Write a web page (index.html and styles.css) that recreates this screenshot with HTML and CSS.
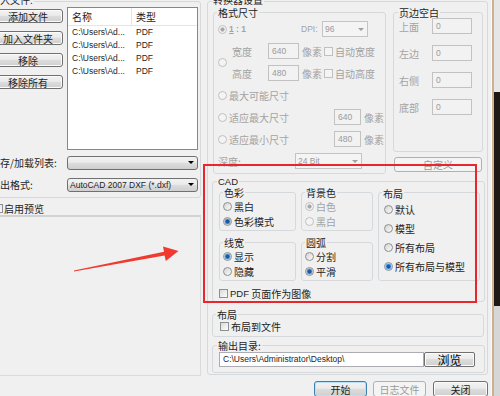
FILE: index.html
```html
<html>
<head>
	<title>PDF 转换</title>
	<link rel="stylesheet" href="styles.css">
</head>

<body>

<div class="screen">
	<div class="dialog">
		<div class="left">
			<div class="group files">
				<div class="legend top">输入文件:</div>
				<div class="files-body">
					<div class="file-buttons">
						<div class="btn">添加文件</div>
						<div class="btn">加入文件夹</div>
						<div class="btn">移除</div>
						<div class="btn">移除所有</div>
					</div>
					<div class="listview">
						<div class="lv-row lv-head"><span>名称</span><span>类型</span></div>
						<div class="lv-row en"><span>C:\Users\Ad...</span><span>PDF</span></div>
						<div class="lv-row en"><span>C:\Users\Ad...</span><span>PDF</span></div>
						<div class="lv-row en"><span>C:\Users\Ad...</span><span>PDF</span></div>
						<div class="lv-row en"><span>C:\Users\Ad...</span><span>PDF</span></div>
					</div>
				</div>
				<div class="field-row">
					<span class="field-label">保存/加载列表:</span>
					<div class="combo"><span></span><i class="caret"></i></div>
				</div>
				<div class="field-row second">
					<span class="field-label">输出格式:</span>
					<div class="combo"><span class="en">AutoCAD 2007 DXF (*.dxf)</span><i class="caret"></i></div>
				</div>
			</div>
			<div class="preview-check"><span class="check"></span>启用预览</div>
			<div class="preview-box"></div>
		</div>

		<div class="right">
			<div class="group converter">
				<div class="legend top">转换器设置</div>
				<div class="top-row">
					<div class="group format">
						<div class="legend">格式尺寸</div>
						<div class="dim">
							<div class="fmt-row">
								<span class="radio on off"></span>
								<span class="w-ratio en"><u>1</u> : 1</span>
								<span class="w-dpi en">DPI:</span>
								<div class="combo edit w-dpibox"><span class="en">96</span><i class="caret"></i></div>
							</div>
							<div class="fmt-size">
								<span class="radio off"></span>
								<div class="size-rows">
									<div class="fmt-row">
										<span class="w-dim">宽度</span>
										<div class="field w-size en">640</div>
										<span class="w-unit">像素</span>
										<span class="check off"></span>
										<span>自动宽度</span>
									</div>
									<div class="fmt-row">
										<span class="w-dim">高度</span>
										<div class="field w-size en">480</div>
										<span class="w-unit">像素</span>
										<span class="check off"></span>
										<span>自动高度</span>
									</div>
								</div>
							</div>
							<div class="fmt-row"><span class="radio off"></span>最大可能尺寸</div>
							<div class="fmt-row">
								<span class="radio off"></span>
								<span class="w-fit">适应最大尺寸</span>
								<div class="field w-fitbox en">640</div>
								<span class="unit-after">像素</span>
							</div>
							<div class="fmt-row">
								<span class="radio off"></span>
								<span class="w-fit">适应最小尺寸</span>
								<div class="field w-fitbox en">480</div>
								<span class="unit-after">像素</span>
							</div>
							<div class="fmt-row">
								<span class="w-depth">深度:</span>
								<div class="combo edit w-depthbox"><span class="en">24 Bit</span><i class="caret"></i></div>
							</div>
						</div>
					</div>

					<div class="margin-col">
						<div class="group margins">
							<div class="legend">页边空白</div>
							<div class="m-row dim"><span class="m-label">上面</span><div class="field w-margin en">0</div></div>
							<div class="m-row dim"><span class="m-label">左边</span><div class="field w-margin en">0</div></div>
							<div class="m-row dim"><span class="m-label">右侧</span><div class="field w-margin en">0</div></div>
							<div class="m-row dim"><span class="m-label">底部</span><div class="field w-margin en">0</div></div>
						</div>
						<div class="btn off custom">自定义</div>
					</div>
				</div>

				<div class="group cad">
					<div class="legend"><span class="en big">CAD</span></div>
					<div class="cad-grid">
						<div class="group sub">
							<div class="legend">色彩</div>
							<div class="opt"><span class="radio"></span>黑白</div>
							<div class="opt"><span class="radio on"></span>色彩模式</div>
						</div>
						<div class="group sub">
							<div class="legend">背景色</div>
							<div class="opt dim"><span class="radio on off"></span>白色</div>
							<div class="opt dim"><span class="radio off"></span>黑白</div>
						</div>
						<div class="group sub layout">
							<div class="legend">布局</div>
							<div class="opt"><span class="radio"></span>默认</div>
							<div class="opt"><span class="radio"></span>模型</div>
							<div class="opt"><span class="radio"></span>所有布局</div>
							<div class="opt"><span class="radio on"></span>所有布局与模型</div>
						</div>
						<div class="group sub">
							<div class="legend">线宽</div>
							<div class="opt"><span class="radio on"></span>显示</div>
							<div class="opt"><span class="radio"></span>隐藏</div>
						</div>
						<div class="group sub">
							<div class="legend">圆弧</div>
							<div class="opt"><span class="radio"></span>分割</div>
							<div class="opt"><span class="radio on"></span>平滑</div>
						</div>
					</div>
					<div class="opt pdf"><span class="check"></span><span class="en big">PDF</span>&nbsp;页面作为图像</div>
				</div>

				<div class="group layout-file">
					<div class="legend">布局</div>
					<div class="opt"><span class="check"></span>布局到文件</div>
				</div>

				<div class="group output">
					<div class="legend">输出目录:</div>
					<div class="path-row">
						<div class="path en">C:\Users\Administrator\Desktop\</div>
						<div class="btn browse">浏览</div>
					</div>
				</div>
			</div>

			<div class="actions">
				<div class="btn default">开始</div>
				<div class="btn off">日志文件</div>
				<div class="btn close">关闭</div>
			</div>
		</div>

		<div class="edge">
			<span class="edge-line"></span>
			<span class="edge-frame"></span>
			<span class="edge-desk"></span>
		</div>
	</div>

	<!-- annotation drawn over the dialog -->
	<div class="mark"></div>
	<svg class="arrow" width="500" height="396" viewBox="0 0 500 396">
		<polygon points="74,271.5 164.6,255.5 165.8,261 178.5,251 163,246.4 164,251.8 74,270.6" fill="#f03a30"/>
	</svg>
</div>

</body>

</html>
```

FILE: styles.css
```css
body {
	margin: 0;
	font-family: "Noto Sans CJK SC", "Noto Sans", sans-serif;
	font-size: 10px;
	color: #1e1e1e;
}

.en {
	font-family: "Liberation Sans", "Noto Sans CJK SC", sans-serif;
	font-size: 8.5px;
}

.en.big {
	font-size: 9.5px;
}

.screen {
	position: relative;
	width: 500px;
	height: 396px;
	overflow: hidden;
	background: #f0f0f0;
}

.dialog {
	display: flex;
	height: 396px;
}

.group {
	box-sizing: border-box;
	border: 1px solid #d5d9dc;
	border-radius: 3px;
}

.legend {
	width: fit-content;
	height: 12px;
	line-height: 12px;
	margin: -6px 0 -1px -2px;
	padding: 0 1px;
	background: #f0f0f0;
	white-space: nowrap;
}

.legend.top {
	margin-top: -8px;
	margin-bottom: 1px;
}

.dim {
	color: #a3a3a3;
}

/* controls */

.btn {
	box-sizing: border-box;
	display: flex;
	align-items: center;
	justify-content: center;
	height: 14px;
	border: 1px solid #707070;
	border-radius: 3px;
	background: linear-gradient(#f2f2f2, #ebebeb 45%, #dddddd 50%, #cfcfcf);
	box-shadow: inset 0 0 0 1px #fbfbfb;
	white-space: nowrap;
}

.btn.off {
	border-color: #adb2b5;
	background: #f4f4f4;
	box-shadow: none;
	color: #9a9a9a;
}

.btn.default {
	border-color: #3c7fb1;
	box-shadow: inset 0 0 0 1px #b9e1f7;
}

.combo {
	box-sizing: border-box;
	display: flex;
	align-items: center;
	width: 131px;
	height: 14px;
	padding: 0 3px 0 2px;
	border: 1px solid #707070;
	border-radius: 3px;
	background: linear-gradient(#f2f2f2, #ebebeb 45%, #dddddd 50%, #cfcfcf);
}

.combo span {
	flex: 1;
	white-space: nowrap;
	overflow: hidden;
}

.caret {
	width: 0;
	height: 0;
	border-left: 3px solid transparent;
	border-right: 3px solid transparent;
	border-top: 3px solid #000;
}

.combo.edit {
	height: 16px;
	border-color: #c4c4c4;
	border-radius: 0;
	background: #f4f4f4;
	color: #9a9a9a;
}

.combo.edit .caret {
	border-top-color: #a0a0a0;
}

.field {
	box-sizing: border-box;
	height: 16px;
	line-height: 14px;
	padding-left: 3px;
	border: 1px solid #c2c2c2;
	background: #f2f2f2;
	color: #9a9a9a;
}

.radio {
	flex: none;
	box-sizing: border-box;
	width: 9px;
	height: 9px;
	margin-right: 2px;
	border: 1px solid #8e8f8f;
	border-radius: 50%;
	background: linear-gradient(135deg, #d3d3d3, #fbfbfb);
}

.radio.on {
	background: radial-gradient(circle, #1b5aa6 0 1.8px, #62a6e2 2.3px 2.8px, #f0f0f0 3.3px);
}

.radio.off {
	border-color: #c0c0c0;
	background: #f4f4f4;
}

.radio.on.off {
	background: radial-gradient(circle, #a8a8a8 0 1.8px, #f4f4f4 2.4px);
}

.check {
	flex: none;
	box-sizing: border-box;
	width: 9px;
	height: 9px;
	margin-right: 2px;
	border: 1px solid #8e8f8f;
	background: linear-gradient(135deg, #dadada, #fdfdfd);
}

.check.off {
	border-color: #c0c0c0;
	background: #f4f4f4;
}

.opt {
	display: flex;
	align-items: center;
	height: 15px;
	white-space: nowrap;
}

/* left side: input files */

.left {
	flex: none;
	width: 213px;
	margin-left: -12px;
}

.files {
	margin-top: 1px;
	padding: 0 2px 5px 4px;
}

.files .legend {
	margin-left: -4px;
}

.files-body {
	display: flex;
	gap: 4px;
}

.file-buttons {
	display: flex;
	flex-direction: column;
	gap: 8px;
	width: 70px;
	padding-top: 2px;
}

.listview {
	box-sizing: border-box;
	width: 131px;
	height: 143px;
	border: 1px solid #828790;
	background: #fff;
}

.lv-row {
	display: flex;
	height: 13px;
	line-height: 13px;
	white-space: nowrap;
}

.lv-row span {
	box-sizing: border-box;
	padding-left: 4px;
	overflow: hidden;
}

.lv-row span:first-child {
	width: 64px;
	flex: none;
}

.lv-head {
	height: 18px;
	line-height: 17px;
	border-bottom: 1px solid #e5e5e5;
	box-sizing: border-box;
}

.lv-head span:first-child {
	border-right: 1px solid #e5e5e5;
}

.field-row {
	display: flex;
	align-items: center;
	margin-top: 5px;
}

.field-row.second {
	margin-top: 7px;
}

.field-label {
	flex: 1;
	margin-left: -3px;
	white-space: nowrap;
}

.preview-check {
	display: flex;
	align-items: center;
	height: 14px;
	margin: 3px 0 0 6px;
}

.preview-check .check {
	margin-right: 1px;
}

.preview-box {
	box-sizing: border-box;
	height: 161px;
	border-top: 2px solid #d2d2d2;
	border-right: 1px solid #dadada;
	border-bottom: 1px solid #dadada;
}

/* right side: converter settings */

.right {
	flex: none;
	width: 290px;
}

.converter {
	width: 281px;
	margin: 1px 0 0 6px;
	padding: 0 0 1px 4px;
}

.converter > .legend {
	margin-left: 0;
}

.top-row {
	display: flex;
	gap: 7px;
	margin: 6px 0 0 1px;
}

.format {
	width: 173px;
	padding: 0 0 1px 4px;
}

.format .legend {
	margin-left: -1px;
	color: #1e1e1e;
}

.fmt-row {
	display: flex;
	align-items: center;
	height: 22px;
	white-space: nowrap;
}

.fmt-size {
	display: flex;
	align-items: center;
}

.size-rows {
	margin-left: 3px;
}

.w-ratio {
	width: 72px;
	font-weight: bold;
}

.w-dpi {
	width: 21px;
}

.w-dpibox {
	width: 46px;
}

.w-dim {
	width: 36px;
}

.w-size {
	width: 31px;
}

.w-unit {
	width: 22px;
	margin-left: 3px;
}

.w-fit {
	width: 105px;
}

.w-fitbox {
	width: 27px;
}

.unit-after {
	margin-left: 3px;
}

.w-depth {
	width: 77px;
}

.w-depthbox {
	width: 67px;
}

.margin-col {
	display: flex;
	flex-direction: column;
}

.margins {
	width: 90px;
	height: 140px;
	padding-left: 5px;
}

.margins .legend {
	margin-left: -1px;
}

.m-row {
	display: flex;
	align-items: center;
	height: 16px;
}

.m-row + .m-row {
	margin-top: 11px;
}

.m-label {
	width: 33px;
}

.w-margin {
	width: 40px;
}

.custom {
	width: 88px;
	height: 15px;
	margin: 5px 0 0 1px;
}

.cad {
	width: 273px;
	margin-top: 7px;
	padding: 0 3px 2px 6px;
}

.cad-grid {
	display: grid;
	grid-template-columns: 77px 72px 102px;
	grid-template-rows: 39px 39px;
	column-gap: 5px;
	row-gap: 11px;
	margin-top: 5px;
}

.sub {
	padding-left: 3px;
}

.sub .legend {
	margin: -6px 0 0 0;
}

.sub.layout {
	grid-column: 3;
	grid-row: 1 / span 2;
	padding: 1px 0 0 5px;
}

.sub.layout .legend {
	margin-left: -2px;
}

.sub.layout .opt {
	height: 19px;
}

.pdf {
	height: 12px;
	margin-top: 6px;
}

.layout-file {
	width: 272px;
	margin-top: 12px;
	padding: 0 0 4px 6px;
}

.layout-file .legend {
	margin-left: -3px;
}

.layout-file .opt {
	height: 12px;
	margin-left: 1px;
}

.output {
	width: 273px;
	margin-top: 8px;
	padding: 0 0 5px 6px;
}

.path-row {
	display: flex;
	height: 15px;
	margin-top: 1px;
}

.path {
	box-sizing: border-box;
	width: 205px;
	padding-left: 3px;
	line-height: 13px;
	border: 1px solid #abadb3;
	background: #fff;
	white-space: nowrap;
}

.browse {
	width: 51px;
	height: 15px;
	border-radius: 2px;
	font-size: 12px;
	color: #000;
}

.actions {
	display: flex;
	justify-content: flex-end;
	gap: 6px;
	margin-top: 6px;
	padding-right: 3px;
}

.actions .btn {
	width: 53px;
	height: 16px;
}

.actions .close {
	width: 55px;
	margin-left: 1px;
}

/* window edge and desktop behind it */

.edge {
	flex: none;
	display: flex;
	width: 9px;
}

.edge-line {
	width: 1px;
	background: #fafafa;
}

.edge-frame {
	width: 2px;
	background: #cdb092;
}

.edge-desk {
	flex: 1;
	background: linear-gradient(#e6e6e6 0 92px, #1d1815 92px 306px, #d6d6d6 306px);
}

/* red annotation */

.mark {
	position: absolute;
	left: 203px;
	top: 164px;
	width: 274px;
	height: 139px;
	box-sizing: border-box;
	border: 2px solid #e8262b;
}

.arrow {
	position: absolute;
	left: 0;
	top: 0;
}
```
